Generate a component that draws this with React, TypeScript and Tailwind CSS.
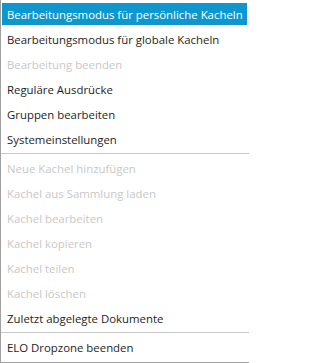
import React from 'react';

type Entry = { label: string; disabled?: boolean; active?: boolean } | 'sep';

const entries: Entry[] = [
    { label: 'Bearbeitungsmodus für persönliche Kacheln', active: true },
    { label: 'Bearbeitungsmodus für globale Kacheln' },
    { label: 'Bearbeitung beenden', disabled: true },
    { label: 'Reguläre Ausdrücke' },
    { label: 'Gruppen bearbeiten' },
    { label: 'Systemeinstellungen' },
    'sep',
    { label: 'Neue Kachel hinzufügen', disabled: true },
    { label: 'Kachel aus Sammlung laden', disabled: true },
    { label: 'Kachel bearbeiten', disabled: true },
    { label: 'Kachel kopieren', disabled: true },
    { label: 'Kachel teilen', disabled: true },
    { label: 'Kachel löschen', disabled: true },
    { label: 'Zuletzt abgelegte Dokumente' },
    'sep',
    { label: 'ELO Dropzone beenden' },
];

const App: React.FC = () => {
    return (
        <div className="w-[249px] h-[363px] bg-white overflow-hidden" style={{ fontFamily: '"Open Sans", "Noto Sans", sans-serif' }}>
            {/* Context menu */}
            <div className="w-[249px] border-l border-b border-[#a0a0a0] pt-[2px] pb-[2px] text-[11.4px]">
                {entries.map((e, i) =>
                    e === 'sep' ? (
                        <div key={i} className="h-[4px] pt-px">
                            <div className="h-px bg-[#c8c8c8]" />
                        </div>
                    ) : (
                        <div key={i} className="h-[25px] pt-px pb-[2px] pl-px pr-[2px]">
                            <div
                                className={`h-[22px] flex items-center pl-[5px] pt-px whitespace-nowrap ${
                                    e.active ? 'bg-[#0e97cf] text-white' : e.disabled ? 'text-[#c8c8c8]' : 'text-[#1e1e1e]'
                                }`}
                            >
                                {e.label}
                            </div>
                        </div>
                    )
                )}
            </div>
        </div>
    );
};

export default App;
